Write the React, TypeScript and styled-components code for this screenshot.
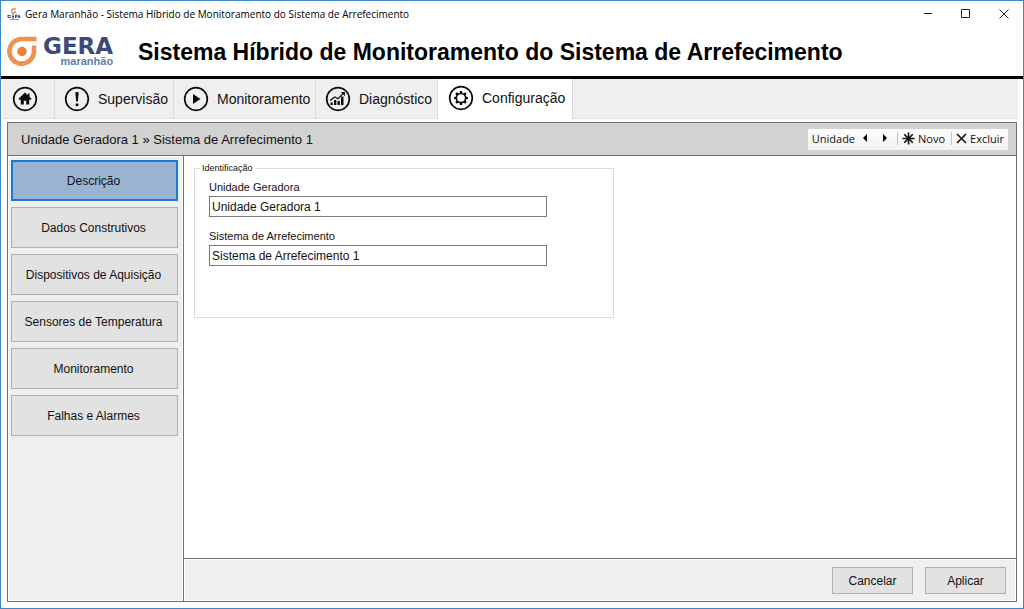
import React from "react";
import styled, { createGlobalStyle, css } from "styled-components";

const GlobalStyle = createGlobalStyle`
  *, *::before, *::after { box-sizing: border-box; }
  body { margin: 0; background: #fff; }
  button, input { font-family: inherit; color: inherit; }
`;

const uiFont = `"Liberation Sans", Arial, sans-serif`;
const chromeFont = `"Open Sans", "Noto Sans", sans-serif`;

const AppWindow = styled.div`
  display: flex;
  flex-direction: column;
  min-height: 100vh;
  border: 1px solid #3f86c6;
  background: #fff;
  color: #111;
  font-family: ${uiFont};
`;

const TitleBar = styled.div`
  display: flex;
  align-items: center;
  height: 25px;
  padding-left: 6px;
  color: #000;
  font-family: ${chromeFont};
  font-size: 10px;
  white-space: nowrap;
`;

const TitleText = styled.span`
  flex: 1;
  margin-left: 4px;
`;

const WindowButton = styled.button`
  display: flex;
  align-items: center;
  justify-content: center;
  width: 38px;
  height: 24px;
  padding: 0;
  border: 0;
  background: transparent;
`;

const Header = styled.header`
  display: flex;
  align-items: center;
  height: 53px;
  padding: 1px 6px 0;
  border-bottom: 3px solid #050505;
`;

const Brand = styled.div`
  display: flex;
  align-items: center;
  width: 131px;
`;

const BrandText = styled.div`
  display: flex;
  flex-direction: column;
  align-items: flex-end;
  margin-left: 6px;
`;

const BrandName = styled.span`
  color: #3b4a78;
  font: bold 23px/20px "DejaVu Sans", sans-serif;
`;

const BrandPlace = styled.span`
  color: #6380ae;
  font-size: 11px;
  font-weight: bold;
  line-height: 11px;
`;

const Heading = styled.h1`
  margin: 0;
  color: #000;
  font-size: 23px;
  font-weight: bold;
  line-height: 28px;
  white-space: nowrap;
`;

const TabStrip = styled.nav`
  display: flex;
  height: 40px;
  margin: 0 5px 0 2px;
  background: #efefef;
  border-bottom: 1px solid #e0e0e0;
`;

const Tab = styled.button<{ $width: number; $active?: boolean }>`
  display: flex;
  align-items: center;
  gap: 8px;
  width: ${(p) => p.$width}px;
  height: 40px;
  padding: 0 0 0 9px;
  border: 0;
  border-right: 1px solid #dadada;
  background: transparent;
  font-size: 14px;
  white-space: nowrap;
  ${(p) =>
    p.$active &&
    css`
      padding: 0 0 3px 10px;
      background: #fff;
    `}
`;

const Workspace = styled.main`
  display: flex;
  flex: 1;
  flex-direction: column;
  margin: 3px 6px 6px;
  border: 1px solid #6f6f6f;
`;

const ContextBar = styled.div`
  display: flex;
  align-items: center;
  justify-content: space-between;
  height: 33px;
  padding: 0 8px 0 13px;
  border-bottom: 1px solid #6f6f6f;
  background: #d2d2d2;
`;

const Breadcrumb = styled.h2`
  margin: 0;
  font-size: 13px;
  font-weight: normal;
`;

const ToolBar = styled.div`
  display: flex;
  align-items: center;
  height: 21px;
  padding: 0 0 2px 4px;
  background: linear-gradient(#fdfdfd, #f2f2f2);
  font-family: ${chromeFont};
  font-size: 11px;
  line-height: 17px;
`;

const ToolButton = styled.button`
  display: flex;
  align-items: center;
  justify-content: center;
  gap: 3px;
  min-width: 20px;
  height: 17px;
  padding: 0 4px;
  border: 0;
  background: transparent;
  font-size: 11px;
`;

const ToolSeparator = styled.span`
  width: 1px;
  height: 13px;
  margin-left: 2px;
  background: #c4c4c4;
`;

const Body = styled.div`
  display: flex;
  flex: 1;
`;

const Sidebar = styled.aside`
  display: flex;
  flex-direction: column;
  gap: 6px;
  width: 175px;
  padding: 3px 4px 3px 2px;
  border: 1px solid #fff;
  background: #efefef;
`;

const SideButton = styled.button<{ $active?: boolean }>`
  height: 41px;
  padding: 0 2px 0 0;
  border: ${(p) => (p.$active ? "2px solid #1b79cf" : "1px solid #b0b0b0")};
  background: ${(p) => (p.$active ? "#99b4d1" : "#e2e2e2")};
  font-size: 12px;
`;

const Content = styled.section`
  display: flex;
  flex: 1;
  flex-direction: column;
  border-left: 1px solid #6f6f6f;
`;

const FormArea = styled.form`
  flex: 1;
  padding: 6px 10px;
`;

const Group = styled.fieldset`
  max-width: 420px;
  min-height: 156px;
  margin: 0;
  padding: 6px 14px 0;
  border: 1px solid #dcdcdc;
`;

const Legend = styled.legend`
  margin-left: -9px;
  padding: 0 2px;
  font-size: 9px;
  line-height: 12px;
`;

const Field = styled.div`
  display: flex;
  flex-direction: column;
  gap: 2px;
  max-width: 338px;
  margin-bottom: 12px;
`;

const FieldLabel = styled.label`
  font-size: 11px;
  line-height: 14px;
`;

const TextBox = styled.input`
  width: 100%;
  height: 21px;
  padding: 0 2px;
  border: 1px solid #7a7a7a;
  background: #fff;
  font-size: 12px;
`;

const Actions = styled.footer`
  display: flex;
  align-items: center;
  justify-content: flex-end;
  gap: 12px;
  height: 43px;
  padding: 1px 10px 0;
  border-top: 1px solid #6f6f6f;
  box-shadow: inset 0 0 0 1px #fff;
  background: #efefef;
`;

const ActionButton = styled.button`
  width: 81px;
  height: 27px;
  padding: 0;
  border: 1px solid #b0b0b0;
  background: #e2e2e2;
  font-size: 12px;
`;

const BrandMark = () => (
  <svg width="30" height="31" viewBox="0 0 30 31" aria-hidden="true">
    <path d="M29.500 3H15A12.300 12.300 0 1 0 27 15.500V9.500" fill="none" stroke="#f0914d" strokeWidth="4.600" />
    <circle cx="15" cy="15.500" r="4.700" fill="#ee8233" />
  </svg>
);

const SmallMark = () => (
  <svg width="14" height="12" viewBox="0 0 14 12" aria-hidden="true">
    <path d="M9 1H6.500A2 2 0 1 0 8.500 3" fill="none" stroke="#ee8a45" strokeWidth="1.300" />
    <path d="M1 7.500h2.500M1 7v2.500h2.500V8.500M5 7h2M5 8.500h2M5 10h2M8.500 10V7h1.500v1.500L8.500 9M11 10l1-3 1 3" fill="none" stroke="#3b4a78" strokeWidth="1" />
    <path d="M3 11.500h9" stroke="#8ea2c6" strokeWidth="1" />
  </svg>
);

type TabIconName = "home" | "alert" | "play" | "chart" | "gear";

const gearTeeth = [0, 45, 90, 135, 180, 225, 270, 315];

const TabIcon = ({ name }: { name: TabIconName }) => (
  <svg width="26" height="26" viewBox="0 0 26 26" aria-hidden="true">
    <circle cx="13" cy="13" r="11.300" fill="none" stroke="#0b0b0b" strokeWidth="1.700" />
    {name === "home" && (
      <path d="M13 6.500l2.800 2.700V7.600h1.700v3.200l2 2-.800.900h-1.500v4.800h-3v-3.700h-2.400v3.700h-3v-4.800H7.300l-.800-.900z" fill="#0b0b0b" />
    )}
    {name === "alert" && (
      <>
        <path d="M11.300 6.800q0-.800 1.700-.800t1.700.800l-.900 8.700h-1.600z" fill="#0b0b0b" />
        <circle cx="13" cy="18.700" r="1.500" fill="#0b0b0b" />
      </>
    )}
    {name === "play" && <path d="M10 8v10l7.500-5z" fill="#0b0b0b" />}
    {name === "chart" && (
      <>
        <path d="M5.500 16.500h2.300V19H5.500zM9 14h2.300v5H9zM12.500 15h2.300v4h-2.300zM16 10.500h2.500V19H16z" fill="#0b0b0b" />
        <path d="M5 14.500l5-3.500 3 1.700 5.500-5.500" fill="none" stroke="#0b0b0b" strokeWidth="1.200" />
        <path d="M15.800 6h4.200v4.200z" fill="#0b0b0b" />
      </>
    )}
    {name === "gear" && (
      <>
        <circle cx="13" cy="13" r="4.600" fill="none" stroke="#0b0b0b" strokeWidth="1.500" />
        {gearTeeth.map((angle) => (
          <path key={angle} d="M11.500 8.500l.500-2.500h2l.500 2.500z" fill="#0b0b0b" transform={`rotate(${angle} 13 13)`} />
        ))}
      </>
    )}
  </svg>
);

const tabs: { label: string; icon: TabIconName; width: number; active?: boolean }[] = [
  { label: "", icon: "home", width: 52 },
  { label: "Supervisão", icon: "alert", width: 119 },
  { label: "Monitoramento", icon: "play", width: 142 },
  { label: "Diagnóstico", icon: "chart", width: 122 },
  { label: "Configuração", icon: "gear", width: 135, active: true },
];

const sections = [
  "Descrição",
  "Dados Construtivos",
  "Dispositivos de Aquisição",
  "Sensores de Temperatura",
  "Monitoramento",
  "Falhas e Alarmes",
];

export default function App() {
  return (
    <AppWindow>
      <GlobalStyle />
      <TitleBar>
        <SmallMark />
        <TitleText>Gera Maranhão - Sistema Híbrido de Monitoramento do Sistema de Arrefecimento</TitleText>
        <WindowButton aria-label="Minimizar">
          <svg width="10" height="10" viewBox="0 0 10 10"><path d="M1 4.500h8" stroke="#222" /></svg>
        </WindowButton>
        <WindowButton aria-label="Maximizar">
          <svg width="10" height="10" viewBox="0 0 10 10"><path d="M.500.500h8v8h-8z" fill="none" stroke="#222" /></svg>
        </WindowButton>
        <WindowButton aria-label="Fechar">
          <svg width="10" height="10" viewBox="0 0 10 10"><path d="M.500.500l9 9M9.500.500l-9 9" stroke="#222" /></svg>
        </WindowButton>
      </TitleBar>

      <Header>
        <Brand>
          <BrandMark />
          <BrandText>
            <BrandName>GERA</BrandName>
            <BrandPlace>maranhão</BrandPlace>
          </BrandText>
        </Brand>
        <Heading>Sistema Híbrido de Monitoramento do Sistema de Arrefecimento</Heading>
      </Header>

      <TabStrip>
        {tabs.map((tab) => (
          <Tab key={tab.icon} $width={tab.width} $active={tab.active} aria-label={tab.label || "Início"}>
            <TabIcon name={tab.icon} />
            {tab.label}
          </Tab>
        ))}
      </TabStrip>

      <Workspace>
        <ContextBar>
          <Breadcrumb>Unidade Geradora 1 » Sistema de Arrefecimento 1</Breadcrumb>
          <ToolBar>
            <span>Unidade</span>
            <ToolButton aria-label="Unidade anterior">
              <svg width="6" height="8" viewBox="0 0 6 8"><path d="M5 0v8L1 4z" /></svg>
            </ToolButton>
            <ToolButton aria-label="Próxima unidade">
              <svg width="6" height="8" viewBox="0 0 6 8"><path d="M1 0v8l4-4z" /></svg>
            </ToolButton>
            <ToolSeparator />
            <ToolButton>
              <svg width="13" height="13" viewBox="0 0 13 13">
                <path d="M6.500.500v12M.500 6.500h12M2.200 2.200l8.600 8.600M10.800 2.200l-8.600 8.600" stroke="#111" strokeWidth="1.600" />
              </svg>
              Novo
            </ToolButton>
            <ToolSeparator />
            <ToolButton>
              <svg width="11" height="11" viewBox="0 0 11 11"><path d="M1 1l9 9M10 1l-9 9" stroke="#111" strokeWidth="1.600" /></svg>
              Excluir
            </ToolButton>
          </ToolBar>
        </ContextBar>
        <Body>
          <Sidebar>
            {sections.map((name, index) => (
              <SideButton key={name} $active={index === 0}>{name}</SideButton>
            ))}
          </Sidebar>
          <Content>
            <FormArea id="descricao" onSubmit={(event) => event.preventDefault()}>
              <Group>
                <Legend>Identificação</Legend>
                <Field>
                  <FieldLabel htmlFor="unidade">Unidade Geradora</FieldLabel>
                  <TextBox id="unidade" defaultValue="Unidade Geradora 1" />
                </Field>
                <Field>
                  <FieldLabel htmlFor="sistema">Sistema de Arrefecimento</FieldLabel>
                  <TextBox id="sistema" defaultValue="Sistema de Arrefecimento 1" />
                </Field>
              </Group>
            </FormArea>
            <Actions>
              <ActionButton type="reset" form="descricao">Cancelar</ActionButton>
              <ActionButton type="submit" form="descricao">Aplicar</ActionButton>
            </Actions>
          </Content>
        </Body>
      </Workspace>
    </AppWindow>
  );
}
